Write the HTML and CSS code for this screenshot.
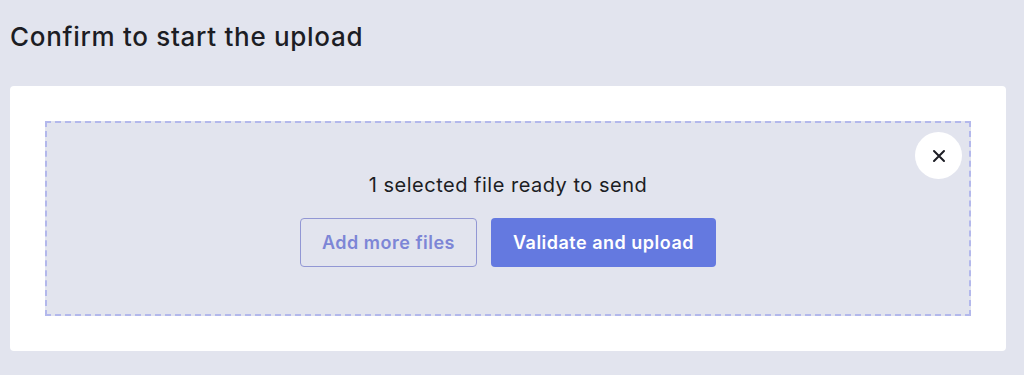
FILE: index.html
```html
<!DOCTYPE html>
<html lang="en">
<head>
  <meta charset="UTF-8" />
  <meta name="viewport" content="width=device-width, initial-scale=1.0"/>
  <title>Confirm upload</title>
  <link rel="stylesheet" href="styles.css">
</head>
<body>
  <h1 class="page-title">Confirm to start the upload</h1>

  <div class="card">
    <div class="dropzone">
      <button class="close-btn" aria-label="Close">
        <svg width="14" height="14" viewBox="0 0 14 14">
          <path d="M2 2 L12 12 M12 2 L2 12" stroke="#1c1d24" stroke-width="2" stroke-linecap="round"/>
        </svg>
      </button>
      <p class="status">1 selected file ready to send</p>
      <div class="actions">
        <button class="btn btn-outline">Add more files</button>
        <button class="btn btn-primary">Validate and upload</button>
      </div>
    </div>
  </div>
</body>
</html>
```

FILE: styles.css
```css
:root {
  --page-bg: #e2e4ee;
  --accent: #6479e0;
  --accent-soft: #7d86d6;
  --dash: #b3b8ec;
  --text: #1c1d24;
}

body {
  margin: 0;
  padding: 0 18px 0 10px;
  background: var(--page-bg);
  font-family: 'Inter', sans-serif;
  color: var(--text);
}

.page-title {
  margin: 0;
  padding-top: 21px;
  height: 86px;
  box-sizing: border-box;
  font-size: 26px;
  line-height: 32px;
  font-weight: 500;
  letter-spacing: 0.7px;
}

.card {
  background: #ffffff;
  border-radius: 4px;
  padding: 35px;
}

.dropzone {
  position: relative;
  height: 195px;
  box-sizing: border-box;
  background: var(--page-bg);
  border: 2px dashed var(--dash);
  display: flex;
  flex-direction: column;
  align-items: center;
  padding-top: 51px;
}

.close-btn {
  position: absolute;
  top: 9px;
  right: 7px;
  width: 47px;
  height: 47px;
  border-radius: 50%;
  border: none;
  background: #ffffff;
  display: flex;
  align-items: center;
  justify-content: center;
  padding: 0;
  cursor: pointer;
}

.status {
  margin: 0;
  font-size: 20px;
  line-height: 22px;
  letter-spacing: 0.5px;
}

.actions {
  display: flex;
  gap: 14px;
  margin-top: 22px;
}

.btn {
  height: 49px;
  border-radius: 4px;
  font-family: 'Inter', sans-serif;
  font-size: 18px;
  font-weight: 600;
  letter-spacing: 0.5px;
  cursor: pointer;
}

.btn-outline {
  width: 177px;
  background: transparent;
  border: 1px solid #9297d4;
  color: var(--accent-soft);
}

.btn-primary {
  width: 225px;
  background: var(--accent);
  border: none;
  color: #ffffff;
}
```
